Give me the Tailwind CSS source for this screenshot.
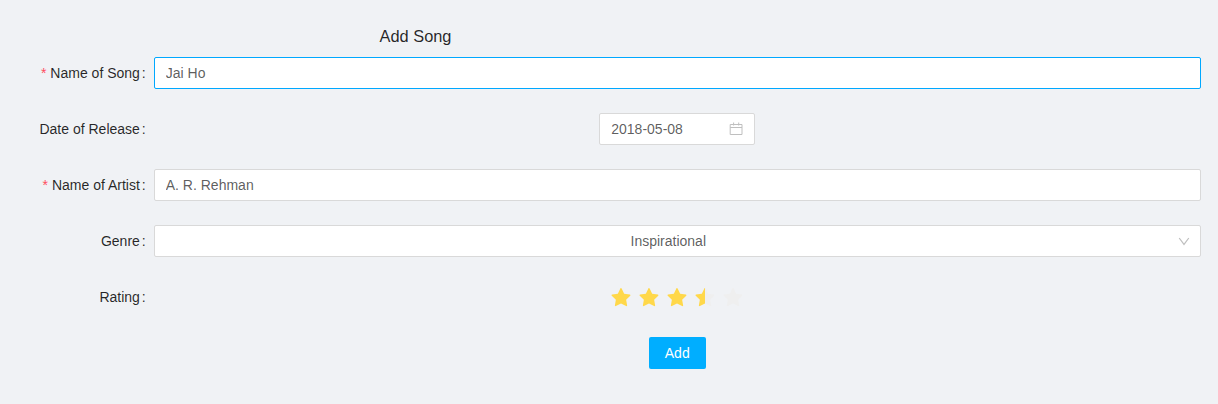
<!DOCTYPE html>
<html lang="en">
<head>
<meta charset="utf-8">
<title>Add Song</title>
<script src="https://cdn.jsdelivr.net/npm/@tailwindcss/browser@4"></script>
</head>
<body class="h-[404px] overflow-hidden bg-[#f0f2f5] font-['Liberation_Sans',Arial,sans-serif] text-sm leading-8 text-black/65">
<svg class="hidden">
  <symbol id="star" viewBox="64 64 896 896"><path d="M908.1 353.1l-253.9-36.9L540.7 86.1c-3.1-6.3-8.2-11.4-14.5-14.5-15.8-7.8-35-1.3-42.9 14.5L369.8 316.2l-253.9 36.9c-7 1-13.4 4.3-18.3 9.3a32.05 32.05 0 0 0 .6 45.3l183.7 179.1-43.4 252.9a31.95 31.95 0 0 0 46.4 33.7L512 754l227.1 119.4c6.2 3.3 13.4 4.4 20.3 3.2 17.4-3 29.1-19.5 26.1-36.9l-43.4-252.9 183.7-179.1c5-4.9 8.3-11.3 9.3-18.3 2.7-17.5-9.5-33.7-27-36.3z"/></symbol>
</svg>
<h1 class="w-[831px] pt-6 text-center text-[16.38px] leading-6 text-black/85">Add Song</h1>
<form class="mt-[9px] grid grid-cols-[145.75px_1047px] gap-x-[8.25px] gap-y-6">
  <label class="text-right text-black/85"><span class="mr-1 text-[#ff4d5f]">*</span>Name of Song<span class="ml-0.5">:</span></label>
  <input class="h-8 rounded-xs border border-[#00a8ff] bg-white px-[10.75px] outline-none" value="Jai Ho">

  <label class="text-right text-black/85">Date of Release<span class="ml-0.5">:</span></label>
  <div class="flex h-8">
    <div class="ml-[445px] flex w-[156px] items-center justify-between rounded-xs border border-[#d9d9d9] bg-white pr-[11px] pl-[11.25px]">
      <span>2018-05-08</span>
      <svg class="size-3.5" viewBox="0 0 14 14" fill="none" stroke="#bfbfbf"><path d="M1.2 2.5h11.8v10H1.2zM1.2 5.5H13M4.6 0.5v3M9.7 0.5v3"/></svg>
    </div>
  </div>

  <label class="text-right text-black/85"><span class="mr-1 text-[#ff4d5f]">*</span>Name of Artist<span class="ml-0.5">:</span></label>
  <input class="h-8 rounded-xs border border-[#d9d9d9] bg-white px-[10.75px]" value="A. R. Rehman">

  <label class="text-right text-black/85">Genre<span class="ml-0.5">:</span></label>
  <div class="flex h-8 items-center rounded-xs border border-[#d9d9d9] bg-white pr-2.5 pl-[11px]">
    <span class="mr-[7.5px] flex-1 text-center leading-[30px]">Inspirational</span>
    <svg class="h-3 w-3" viewBox="0 0 12 12" fill="none" stroke="#bfbfbf" stroke-width="1.2"><path d="M1.2 3l4.8 6.4 4.8-6.4"/></svg>
  </div>

  <label class="text-right text-black/85">Rating<span class="ml-0.5">:</span></label>
  <div class="flex h-8 items-center gap-2 pt-0.5 pl-[457px]">
    <svg class="size-5 fill-[#ffd84a]"><use href="#star"/></svg>
    <svg class="size-5 fill-[#ffd84a]"><use href="#star"/></svg>
    <svg class="size-5 fill-[#ffd84a]"><use href="#star"/></svg>
    <div class="relative size-5">
      <svg class="size-5 fill-[#efefef]"><use href="#star"/></svg>
      <div class="absolute top-0 left-0 h-5 w-2.5 overflow-hidden"><svg class="size-5 max-w-none fill-[#ffd84a]"><use href="#star"/></svg></div>
    </div>
    <svg class="size-5 fill-[#efefef]"><use href="#star"/></svg>
  </div>
</form>
<button class="mt-6 ml-[649px] h-8 w-[57px] rounded-xs bg-[#00aeff] pr-[0.5px] text-white">Add</button>
</body>
</html>
